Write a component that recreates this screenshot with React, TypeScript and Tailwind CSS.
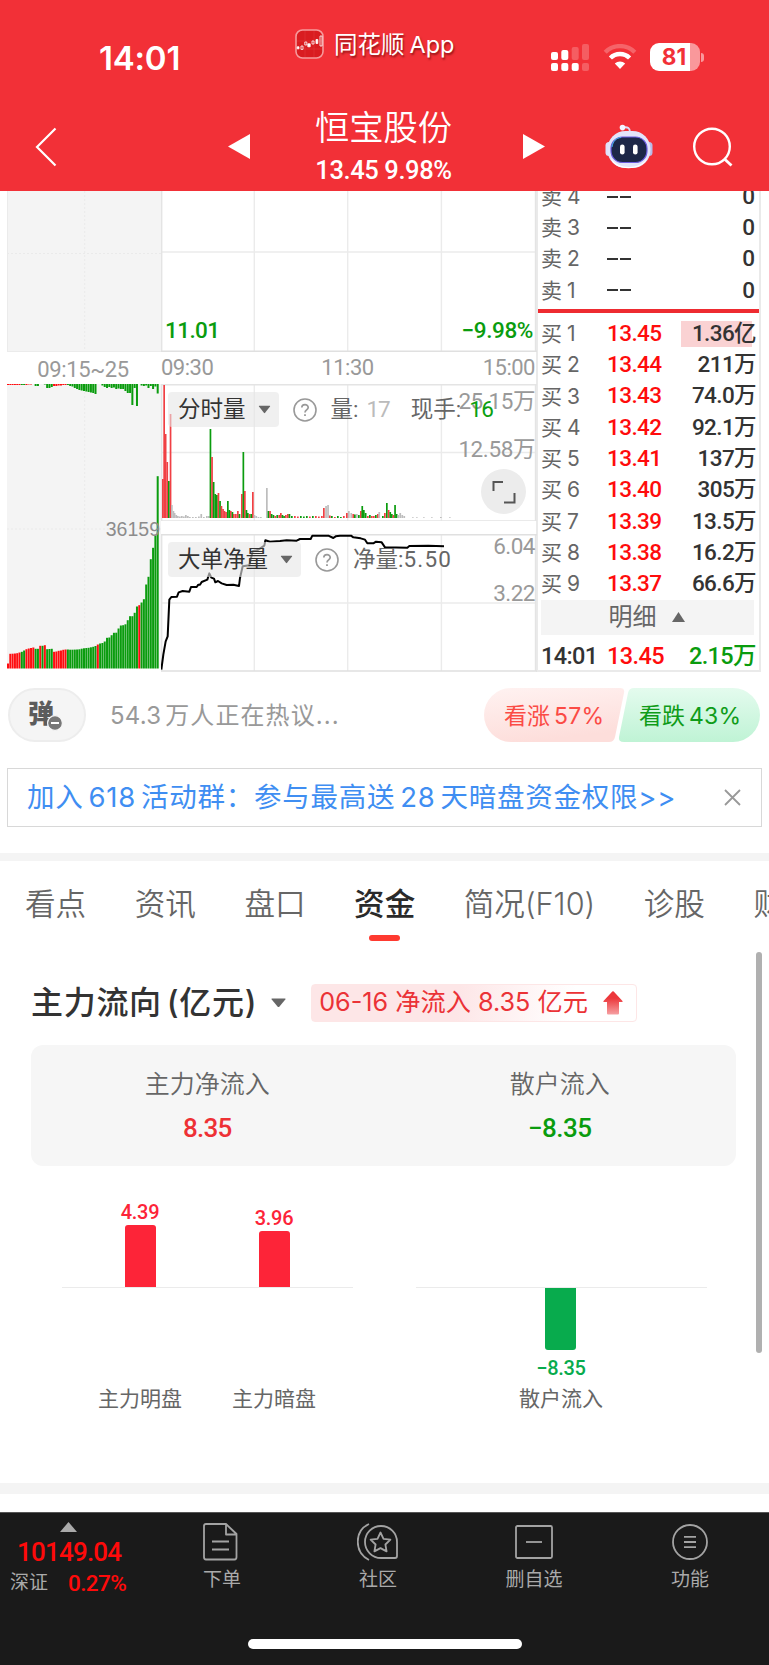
import type { ReactNode } from "react";

const DIN = "font-['Roboto','Noto_Sans_CJK_SC',sans-serif]";

const RED = "#f04044";
const GREEN = "#0a9c0e";
const GRAY = "#bdbdbd";

const asks = ["4", "3", "2", "1"];

const bids = [
  { level: "1", price: "13.45", amount: "1.36亿" },
  { level: "2", price: "13.44", amount: "211万" },
  { level: "3", price: "13.43", amount: "74.0万" },
  { level: "4", price: "13.42", amount: "92.1万" },
  { level: "5", price: "13.41", amount: "137万" },
  { level: "6", price: "13.40", amount: "305万" },
  { level: "7", price: "13.39", amount: "13.5万" },
  { level: "8", price: "13.38", amount: "16.2万" },
  { level: "9", price: "13.37", amount: "66.6万" },
];

// Call auction: matched volume, one bar per tick
const auctionBars = [
  5, 14.7, 14.8, 15, 15.3, 16, 16.7, 18, 19.3, 20, 20.5, 21, 19.7, 19.7, 22.7, 22.7, 23.3, 19.3, 19.5, 19.7, 16.7, 17,
  17.7, 18, 18.7, 19, 19, 18.8, 18.8, 18.9, 19, 19.2, 19.8, 20.2, 20.5, 20.7, 21.2, 21.7, 22.5, 24, 25, 25.5, 27, 30.7,
  31, 33.3, 35.7, 35.8, 40, 43, 43.3, 44.2, 48.3, 52.3, 52.3, 55.7, 62, 63.3, 66, 69.3, 84, 91.7, 109.3, 120.7, 132.7,
  192.3,
];
const auctionRed = [0, 1, 2, 3, 4, 5, 8, 9, 10, 11, 14, 16, 20, 21, 22, 23, 24, 25, 39, 57];

// Call auction: unmatched volume, hangs from the top edge
const unmatchedBars = [
  1, 1, 1, 1, 1, 1, 1, 1, 1, 0.5, 0.5, 0, 2, 2, 0, 0, 0.5, 4, 4, 3, 2, 2, 1.5, 1.5, 1, 1, 1, 2, 2.5, 4, 5, 6, 6.5, 7,
  7.5, 8, 8.5, 9, 10, 0, 0, 1.5, 3, 4, 3, 4, 3.5, 5, 4.5, 5, 5, 7, 9, 9, 21, 4, 22, 0, 1.5, 2, 1.5, 4, 2, 5, 2.5, 9.5,
];
const unmatchedRed = [0, 1, 2, 3, 4, 5, 8, 9, 10, 20, 21, 22, 23, 24, 25];

// [x, height, colour] in a 376x137 panel
const volumeBars: [number, number, string][] = [
  [1, 39, RED], [2.3, 133, RED], [3.8, 84, RED], [5.4, 56, RED], [7, 37, GREEN], [8.7, 104, RED], [10, 13, GRAY],
  [11.6, 7, GRAY], [12.8, 5, GRAY], [14.4, 3, GRAY], [16, 2, GRAY], [18, 1.5, GRAY], [20, 2, GRAY], [22, 1.5, GRAY],
  [24, 3, GRAY], [26, 2, GRAY], [28, 1, GRAY], [31, 1, GRAY], [34, 1, GRAY], [37, 1.5, GRAY], [39.4, 4, GRAY],
  [42, 1, GRAY], [45, 2, GRAY], [47, 2, GRAY], [48.6, 89, GREEN], [50.2, 61, RED], [51.8, 36, GREEN], [53.4, 24, GREEN],
  [55, 23, GREEN], [56.6, 25, RED], [58.2, 17, GREEN], [59.6, 12, RED], [61.2, 9, RED], [62.6, 7, RED], [64.2, 6, RED],
  [66, 17, GREEN], [67.5, 8, GREEN], [69, 7, RED], [70.6, 6, GREEN], [72, 4, RED], [74, 4, RED], [76, 7, RED],
  [77.6, 4, GREEN], [80, 24, RED], [81.5, 66, GREEN], [83, 27, RED], [84.6, 8, GREEN], [86, 5, GREEN], [87.8, 4, RED],
  [89.4, 4, GREEN], [91, 26, RED], [92.6, 3, GRAY], [94.4, 2, GRAY], [96.6, 1, GRAY], [99, 1, GRAY], [105, 30, GRAY],
  [106.6, 7, GREEN], [108.2, 7, RED], [109.8, 4, GREEN], [111.6, 3, GREEN], [113.4, 2, RED], [115.4, 3, GREEN],
  [117.4, 3, RED], [119, 5, RED], [120.6, 3, GREEN], [122.2, 2, GREEN], [124, 3, RED], [126, 4, RED], [127.6, 4, GREEN],
  [130, 2, GREEN], [133, 2, RED], [136, 1.5, RED], [139, 2, GREEN], [142, 1.5, GREEN], [145, 2, GREEN], [148, 1.5, RED],
  [151, 2, GREEN], [154, 2, RED], [157, 1.5, RED], [160, 2, RED], [162, 10, RED], [164.2, 12, GRAY], [166.2, 13, GRAY],
  [168, 2.5, RED], [170, 2, GREEN], [173, 1, RED], [176, 2, GREEN], [179, 1, GREEN], [182, 2, RED], [185, 5, RED],
  [187, 7, GRAY], [189.4, 5, GRAY], [191.4, 4, RED], [193, 3.5, GREEN], [195, 4, GRAY], [197, 3, GREEN], [199, 7, RED],
  [200.4, 12, GREEN], [202, 8, GREEN], [203.8, 5, GREEN], [206, 2, RED], [208, 3, GREEN], [210, 2, RED], [212, 2, RED],
  [214, 3, GREEN], [216, 4, RED], [217.4, 6, GRAY], [221, 2, GREEN], [223, 5, RED], [225, 15, GREEN], [226.8, 8, RED],
  [228.4, 6, GREEN], [230, 4, GREEN], [231.6, 3, RED], [233.2, 13, GREEN], [234.8, 4, GREEN], [236.4, 3, GRAY],
  [238.4, 5, GRAY], [240.4, 3, GRAY], [242.4, 2, GRAY], [251, 0.7, GRAY], [255, 0.7, GRAY], [262, 0.7, GRAY],
  [270, 0.7, GRAY], [279, 1, GRAY], [288, 0.7, GRAY],
];

const netLine =
  "1,407 7,362 14,322 20,307 25,197 31,189 48,188 53,175 65,171 85,173 90,159 107,159 112,152 117,152 122,144 139,137 145,118 151,131 159,134 163,145 171,141 182,148 197,153 217,152 234,156 237,132 245,97 265,94 275,52 292,47 310,35 313,19 327,23 357,21 377,19 407,20 417,15 449,15 454,5 502,5 517,12 524,7 537,5 570,5 577,10 599,13 612,17 619,28 637,28 645,23 662,25 672,40 739,41 745,36 802,35 849,37";

function TimeGrid({ height, middle }: { height: number; middle: number }) {
  return (
    <g stroke="#ebebeb" strokeWidth="1.4" fill="none">
      <path d={`M93.3 0V${height} M186.7 0V${height} M280.4 0V${height} M0 ${middle}H374`} />
      <path d={`M0.7 0V${height} M374.5 0V${height}`} stroke="#e4e4e4" />
    </g>
  );
}

function Help() {
  return (
    <svg width="24" height="24" viewBox="0 0 24 24" fill="none" stroke="#999" strokeWidth="1.6">
      <circle cx="12" cy="12" r="11" />
      <path d="M8.8 9.6c0-4 6.4-4 6.4-.1 0 2.4-3.2 2.5-3.2 5" strokeWidth="1.700" />
      <path d="M12 16.2v1.8" strokeWidth="1.8" />
    </svg>
  );
}

function Caret({ className = "" }: { className?: string }) {
  return (
    <svg className={className} width="13" height="9" viewBox="0 0 13 9" fill="#666">
      <path d="M1.3.8h10.4q.8 0 .3.7L7.1 7.8q-.6.7-1.2 0L1 1.5Q.5.8 1.3.8z" />
    </svg>
  );
}

function StatusBar() {
  return (
    <div className="relative flex h-[104px] items-start">
      <span className="mt-[35.500px] ml-[99px] w-[196px] text-[33px] leading-[44px] font-semibold tracking-[-0.200px]">14:01</span>
      <svg className="mt-[29px]" width="29" height="30" viewBox="0 0 29 30" fill="none">
        <rect x="1" y="1" width="27" height="28" rx="6.5" fill="#d91c20" stroke="#f69a9c" strokeWidth="1.6" />
        <path d="M2 12h25M2 20h25M10 2v26M19 2v26" stroke="#e23a3d" strokeWidth=".5" />
        <g stroke="#fff" strokeWidth=".8">
          <path d="M2.200 17.800h1.800v2H2.200zM12.800 14.800h2.400v3h-2.400zM21 10.500h1.800v4H21z" fill="#fff" />
          <path d="M6 17h2v3.400H6zM9.800 13h2v3h-2zM17 12h2v3h-2zM25 7h2v10h-2z" />
        </g>
      </svg>
      <span className="mt-[28px] ml-[10px] text-[23.500px] leading-[34px] whitespace-nowrap [text-shadow:1px_2px_2px_rgba(90,0,0,0.6)]">
        同花顺<span className="ml-[5px]">App</span>
      </span>
      <svg className="absolute top-[43px] left-[551px]" width="39" height="28" viewBox="0 0 39 28" fill="#fff">
        <rect y="9" width="7" height="8" rx="2" />
        <rect x="10.3" y="7" width="7" height="10" rx="2" />
        <rect x="20.7" y="4" width="7" height="13" rx="2" opacity=".22" />
        <rect x="31" y="1" width="7" height="16" rx="2" opacity=".22" />
        <rect y="20" width="7" height="8" rx="2" />
        <rect x="10.3" y="20" width="7" height="8" rx="2" />
        <rect x="20.7" y="20" width="7" height="8" rx="2" />
        <rect x="31" y="20" width="7" height="8" rx="2" opacity=".22" />
      </svg>
      <svg className="absolute top-[44px] left-[603px]" width="34" height="26" viewBox="0 0 34 26" fill="none" stroke="#fff">
        <path d="M2.2 8.2a21 21 0 0 1 29.6 0" strokeWidth="4.4" opacity=".25" />
        <path d="M7.4 14a13.5 13.5 0 0 1 19.2 0" strokeWidth="4.4" />
        <path d="M11.8 19.6a7.3 7.3 0 0 1 10.4 0L17 25z" fill="#fff" stroke="none" />
      </svg>
      <div className="absolute top-[43px] left-[650px] flex items-center">
        <div className="flex h-[28px] w-[50px] items-center justify-center rounded-[9px] bg-[linear-gradient(90deg,#fff_81%,#f9989b_81%)] text-[22.500px] leading-none font-bold text-[#f23037]">
          <span className="-ml-[2px]">81</span>
        </div>
        <div className="ml-[1px] h-[9px] w-[3px] rounded-r-full bg-[#f9989b]" />
      </div>
    </div>
  );
}

function RobotIcon() {
  return (
    <svg width="48" height="45" viewBox="0 0 48 45" fill="none">
      <path d="M18 3.5c5-.8 7 .5 7 5" stroke="#dcdcf6" strokeWidth="2" />
      <circle cx="17.5" cy="3.6" r="2.8" fill="#f4f4ff" />
      <rect x=".5" y="18" width="7" height="14" rx="3.5" fill="#dfe0fa" />
      <rect x="40.5" y="18" width="7" height="14" rx="3.5" fill="#b9bbe8" />
      <rect x="2.5" y="7" width="43" height="37" rx="18" fill="#e3e4fa" />
      <path d="M6 34c7 12 29 12 36 0-2 13-34 14-36 0z" fill="#fff" />
      <rect x="6" y="13" width="36" height="25.500" rx="11.500" fill="#1d2748" stroke="#6c5de0" strokeWidth="1.2" />
      <path d="M7 23c1-6 4-9 9-9.500" stroke="#43b8e8" strokeWidth="1" />
      <rect x="15" y="20.500" width="4.600" height="10" rx="2.300" fill="#fff" />
      <rect x="28" y="20.500" width="4.600" height="10" rx="2.300" fill="#fff" />
    </svg>
  );
}

function Header() {
  return (
    <header className="h-[191px] bg-[#f23037] text-white">
      <StatusBar />
      <div className="flex h-[87px] items-start">
        <svg className="mt-[23px] ml-[35px]" width="22" height="40" viewBox="0 0 22 40" fill="none" stroke="#fff" strokeWidth="2.2">
          <path d="M20.500 1.500 2 20l18.500 18.500" />
        </svg>
        <svg className="mt-[30px] ml-[171px]" width="22" height="25" viewBox="0 0 22 25" fill="#fff">
          <path d="M0 12.500 22 0v25z" />
        </svg>
        <div className="ml-[45px] flex w-[177px] flex-col items-center">
          <div className="mt-[2px] text-[34.300px] leading-[44px] font-[350]">恒宝股份</div>
          <div className={`${DIN} text-[25.500px] leading-[40px] font-medium tracking-[-0.400px]`}>13.45 9.98%</div>
        </div>
        <svg className="mt-[30px] ml-[51px]" width="22" height="25" viewBox="0 0 22 25" fill="#fff">
          <path d="M22 12.500 0 0v25z" />
        </svg>
        <div className="mt-[20px] ml-[60px]">
          <RobotIcon />
        </div>
        <svg className="mt-[23px] ml-[40px]" width="41" height="41" viewBox="0 0 41 41" fill="none" stroke="#fff" strokeWidth="2.400">
          <circle cx="19" cy="19.500" r="17.800" />
          <path d="m31.500 32 7 6.500" strokeWidth="2.800" />
        </svg>
      </div>
    </header>
  );
}

function AuctionColumn() {
  const step = 152 / auctionBars.length;
  return (
    <div className="w-[154px]">
      <svg className="block" width="154" height="161" viewBox="0 0 154 161">
        <rect width="154" height="161" fill="#f4f4f4" />
        <path d="M77.700 0V161M0 62.500H154" stroke="#eaeaea" strokeDasharray="2 2" />
        <path d="M.5 0V161M0 160.500H154" stroke="#ebebeb" />
      </svg>
      <div className={`${DIN} h-[32px] text-center text-[22px] leading-[35px] tracking-[-0.400px] text-[#999]`}>
        <span className="-ml-[2px]">09:15~25</span>
      </div>
      <div className="relative">
        <svg className="block" width="154" height="287" viewBox="0 0 154 287">
          <rect width="154" height="284" fill="#f4f4f4" />
          <path d="M77.700 0V284M0 145H154" stroke="#eaeaea" strokeDasharray="2 2" />
          {auctionBars.map((h, i) => (
            <rect key={i} x={i * step} y={284.500 - h} width={2} height={h} fill={auctionRed.includes(i) ? "#ff0d10" : GREEN} />
          ))}
          {unmatchedBars.map((h, i) => (
            <rect key={i} x={i * step} y={0} width={2} height={h} fill={unmatchedRed.includes(i) ? "#ff0d10" : GREEN} />
          ))}
        </svg>
        <span className="absolute top-[133px] right-[1px] font-['Liberation_Sans',sans-serif] text-[19.500px] leading-[24px] text-[#8c8c8c]">
          36159
        </span>
      </div>
    </div>
  );
}

function ChartLegend({ name, children }: { name: string; children: ReactNode }) {
  return (
    <div className="absolute top-[8px] left-[7px] flex h-[35px] items-center text-[22.500px] text-[#666]">
      <div className="flex h-full items-center rounded-[4px] bg-[#e6e6e6]/60 pr-[8px] pl-[10px] text-[#333]">
        {name}
        <Caret className="ml-[12px]" />
      </div>
      <div className="ml-[14px]">
        <Help />
      </div>
      {children}
    </div>
  );
}

function IntradayColumn() {
  return (
    <div className={`${DIN} w-[376px]`}>
      <div className="relative h-[161px]">
        <svg className="block" width="376" height="161" viewBox="0 0 376 161">
          <TimeGrid height={161} middle={61} />
          <path d="M0 160.300H376" stroke="#e0e0e0" strokeWidth="1.400" />
        </svg>
        <span className="absolute bottom-[8px] left-[4px] text-[22.500px] leading-[28px] font-medium tracking-[-0.600px] text-[#0a9c0e]">11.01</span>
        <span className="absolute right-[4px] bottom-[8px] text-[22.500px] leading-[28px] font-medium tracking-[-0.400px] text-[#0a9c0e]">−9.98%</span>
      </div>
      <div className="flex h-[32px] justify-between pr-[2px] text-[22px] leading-[31px] tracking-[-0.500px] text-[#999]">
        <span>09:30</span>
        <span className="-ml-[1px]">11:30</span>
        <span>15:00</span>
      </div>
      <div className="relative h-[137px]">
        <svg className="block" width="376" height="137" viewBox="0 0 376 137">
          <TimeGrid height={137} middle={68.500} />
          <path d="M0 .7H376M0 137H376" stroke="#e4e4e4" strokeWidth="1.400" />
          {volumeBars.map(([x, h, fill]) => (
            <rect key={x} x={x} y={134 - h} width={1.700} height={h} fill={fill} />
          ))}
        </svg>
        <span className="absolute top-[3px] right-[2px] text-[22.500px] leading-[28px] tracking-[-0.400px] text-[#999]">25.15万</span>
        <span className="absolute top-[51px] right-[2px] text-[22.500px] leading-[28px] tracking-[-0.400px] text-[#999]">12.58万</span>
        <ChartLegend name="分时量">
          <span className="ml-[14px]">量:</span>
          <span className="ml-[8px] tracking-[-1px] text-[#bbb]">17</span>
          <span className="ml-[21px]">现手:</span>
          <span className="ml-[8px] tracking-[-0.500px] text-[#0aa010]">16</span>
        </ChartLegend>
        <div className="absolute top-[85px] right-[11px] flex size-[45px] items-center justify-center rounded-full bg-[#ececec]">
          <svg width="24" height="24" viewBox="0 0 24 24" fill="none" stroke="#555" strokeWidth="2">
            <path d="M1.500 11V2H11M22.500 13v9.500H12" />
          </svg>
        </div>
      </div>
      <div className="relative mt-[13px] h-[138px]">
        <svg className="block" width="376" height="138" viewBox="0 0 1128 414">
          <g transform="scale(3)">
            <TimeGrid height={137} middle={69} />
            <path d="M0 .7H376M0 137H376" stroke="#e0e0e0" strokeWidth="1.400" />
          </g>
          <polyline points={netLine} fill="none" stroke="#000" strokeWidth="6" strokeLinejoin="round" />
        </svg>
        <span className="absolute top-[-2px] right-[2px] text-[22.500px] leading-[28px] tracking-[-0.500px] text-[#999]">6.04</span>
        <span className="absolute top-[45px] right-[2px] text-[22.500px] leading-[28px] tracking-[-0.500px] text-[#999]">3.22</span>
        <ChartLegend name="大单净量">
          <span className="ml-[14px]">
            净量:<span className="tracking-[1.200px]">5.50</span>
          </span>
        </ChartLegend>
      </div>
    </div>
  );
}

function OrderBook() {
  return (
    <div className={`${DIN} -ml-px flex h-[481px] w-[225px] flex-col overflow-hidden border-x-2 border-b-2 border-[#eaeaea]`}>
      <div className="flex h-[118px] shrink-0 flex-col justify-end overflow-hidden pb-[3px]">
        {asks.map((level) => (
          <div key={level} className="flex h-[31.200px] shrink-0 items-center pr-[4px] pl-[3px] text-[22.500px] text-[#333]">
            <span className="w-[66px] font-['Inter','Noto_Sans_CJK_SC',sans-serif] text-[21px] text-[#666]">
              卖<span className="ml-[5px]">{level}</span>
            </span>
            <span className="flex gap-[2px]">
              <i className="h-[2px] w-[11px] bg-[#333]" />
              <i className="h-[2px] w-[11px] bg-[#333]" />
            </span>
            <span className="ml-auto font-medium">0</span>
          </div>
        ))}
      </div>
      <div className="h-[4px] shrink-0 bg-[#ee2b31]" />
      <div className="mt-[5px] flex shrink-0 flex-col">
        {bids.map(({ level, price, amount }) => (
          <div key={level} className="flex h-[31.300px] items-center pl-[3px] text-[22.500px] font-medium">
            <span className="w-[66px] font-['Inter','Noto_Sans_CJK_SC',sans-serif] text-[21px] font-normal text-[#666]">
              买<span className="ml-[5px]">{level}</span>
            </span>
            <span className="tracking-[-0.600px] text-[#ff0c0c]">{price}</span>
            <span
              className={`ml-auto flex h-[26px] items-center justify-end tracking-[-0.600px] text-[#333] ${
                level === "1" ? "w-[78px] bg-[linear-gradient(90deg,#fad2d3_71px,transparent_71px)] pr-[3px]" : "pr-[3px]"
              }`}
            >
              {amount}
            </span>
          </div>
        ))}
      </div>
      <div className="ml-[3px] flex h-[35px] w-[213px] shrink-0 items-center justify-center bg-[#f4f4f4] pr-[2px] text-[24px] text-[#666]">
        明细
        <svg className="ml-[15px]" width="13" height="10" viewBox="0 0 13 10" fill="#666">
          <path d="M6.500 0 13 10H0z" />
        </svg>
      </div>
      <div className="flex h-[43px] shrink-0 items-center pr-[3px] pl-[3px] text-[23.500px] font-medium tracking-[-0.600px] text-[#333]">
        <span className="w-[66px]">14:01</span>
        <span className="text-[#ff0c0c]">13.45</span>
        <span className="ml-auto text-[#0a9c0e]">2.15万</span>
      </div>
    </div>
  );
}

function DiscussionRow() {
  return (
    <div className="mt-[16px] flex h-[54px] items-center pr-[9px] pl-[8px]">
      <div className="flex h-[54px] w-[78px] items-center justify-center rounded-full border-2 border-[#ededed] bg-[#f5f5f5]">
        <div className="relative -mt-[2px] -ml-[12px] text-[26px] leading-[32px] font-black text-[#5c5c5c]">
          弹
          <svg className="absolute top-[17px] left-[19px]" width="16" height="16" viewBox="0 0 16 16">
            <circle cx="8" cy="8" r="7.400" fill="#777" stroke="#f5f5f5" strokeWidth="1.200" />
            <path d="M4 8h8" stroke="#fff" strokeWidth="2" />
          </svg>
        </div>
      </div>
      <span className="mt-[2px] ml-[24px] text-[24px] tracking-[0.200px] text-[#999]">
        54.3<span className="ml-[4px] tracking-[1.100px]">万人正在热议...</span>
      </span>
      <div className="relative ml-auto flex h-[54px] w-[276px] text-[23px]">
        <svg className="absolute inset-0" width="276" height="54" viewBox="0 0 276 54">
          <defs>
            <linearGradient id="up" x1="0" y1="0" x2="0.300" y2="1">
              <stop offset="0" stopColor="#fff2f1" />
              <stop offset="1" stopColor="#fddedb" />
            </linearGradient>
            <linearGradient id="down" x1="0" y1="0" x2="0" y2="1">
              <stop offset="0" stopColor="#e4fbee" />
              <stop offset="1" stopColor="#bff3d5" />
            </linearGradient>
          </defs>
          <path d="M27 0H136q5 0 4 5l-9 44q-1 5-6 5H27a27 27 0 0 1 0-54z" fill="url(#up)" />
          <path d="M150 0h99a27 27 0 0 1 0 54H140q-6 0-5-5l9-44q1-5 6-5z" fill="url(#down)" />
        </svg>
        <span className="relative w-[136px] pl-[20px] leading-[56px] text-[#fb4b45]">
          看涨<span className="ml-[4px] tracking-[0.200px]">57%</span>
        </span>
        <span className="relative pl-[19px] leading-[56px] text-[#0f9c19]">
          看跌<span className="ml-[4px] tracking-[0.200px]">43%</span>
        </span>
      </div>
    </div>
  );
}

function Tabs() {
  const tabs = ["看点", "资讯", "盘口", "资金", "简况(F10)", "诊股", "财务"];
  return (
    <nav className="flex h-[91px] gap-[48.500px] overflow-hidden pl-[25px] text-[30.600px] whitespace-nowrap text-[#666]">
      {tabs.map((tab) => (
        <div key={tab} className="flex shrink-0 flex-col items-center">
          <span className={`mt-[21px] leading-[44px] ${tab === "资金" ? "font-medium text-[#2a2a2a]" : "font-[350]"}`}>{tab}</span>
          {tab === "资金" && <i className="mt-[9px] h-[6px] w-[31px] rounded-full bg-[#fe3a30]" />}
        </div>
      ))}
    </nav>
  );
}

function FlowBar({ value, label, className }: { value: string; label: string; className: string }) {
  const negative = value.startsWith("−");
  return (
    <div className={`flex w-[134px] flex-col items-center ${className}`}>
      <div className="flex h-[88px] flex-col items-center justify-end">
        {!negative && (
          <>
            <span className={`${DIN} text-[20px] leading-[26px] font-medium tracking-[-0.300px] text-[#fd2438]`}>{value}</span>
            <i className={`w-[31px] rounded-t-[3px] bg-[#fd2438] ${value === "4.39" ? "h-[62px]" : "h-[56px]"}`} />
          </>
        )}
      </div>
      <div className="flex h-[98px] flex-col items-center pt-[1px]">
        {negative && (
          <>
            <i className="h-[62px] w-[31px] rounded-b-[3px] bg-[#08ab4d]" />
            <span className={`${DIN} mt-[5px] text-[20px] leading-[26px] font-medium tracking-[-0.300px] text-[#08ab4d]`}>{value}</span>
          </>
        )}
      </div>
      <span className="text-[21px] leading-[28px] text-[#666]">{label}</span>
    </div>
  );
}

function FundPanel() {
  return (
    <section className="relative h-[531px] pr-[33px] pl-[31px]">
      <div className="absolute top-0 right-[7px] h-[401px] w-[6px] rounded-full bg-[#b0b0b0]" />
      <div className="flex h-[101px] items-center">
        <h2 className="text-[32px] font-medium tracking-[0.700px] whitespace-nowrap text-[#333]">
          主力流向<span className="ml-[5px]">(亿元)</span>
        </h2>
        <svg className="ml-[14px]" width="15" height="10" viewBox="0 0 15 10" fill="#666">
          <path d="M1 .5h13q1 0 .3.900L8.500 8.600q-1 1-2 0L.7 1.400Q0 .5 1 .5z" />
        </svg>
        <div className="ml-[25px] flex h-[38px] w-[326px] shrink-0 items-center rounded-[4px] border border-[#fde6e6] bg-[linear-gradient(100deg,#fde6e7_45%,#fff_80%)] pl-[7px] text-[25.200px] whitespace-nowrap text-[#eb3236]">
          06-16 净流入 8.35 亿元
          <svg className="ml-[15px]" width="20" height="24" viewBox="0 0 20 24">
            <defs>
              <linearGradient id="arrow" x1="0" y1="0" x2="0" y2="1">
                <stop offset=".3" stopColor="#ec373b" />
                <stop offset="1" stopColor="#f6a0a2" />
              </linearGradient>
            </defs>
            <path d="M9.300.5q.7-.6 1.400 0l8.800 9.500q.6 1-.5 1H16v11.500q0 1-1 1H5q-1 0-1-1V11H1q-1.100 0-.5-1z" fill="url(#arrow)" />
          </svg>
        </div>
      </div>
      <div className="mt-[-8px] grid h-[121px] grid-cols-2 rounded-[12px] bg-[#f6f6f6] text-center">
        <div className="pt-[22px]">
          <div className="text-[25px] leading-[34px] font-[350] text-[#666]">主力净流入</div>
          <div className={`${DIN} mt-[10px] text-[26px] leading-[34px] font-medium tracking-[-0.800px] text-[#ee3135]`}>8.35</div>
        </div>
        <div className="pt-[22px]">
          <div className="text-[25px] leading-[34px] font-[350] text-[#666]">散户流入</div>
          <div className={`${DIN} mt-[10px] text-[26px] leading-[34px] font-medium tracking-[-0.500px] text-[#0a9c0e]`}>−8.35</div>
        </div>
      </div>
      <div className="relative mt-[33px] flex">
        <i className="absolute top-[88px] left-[31px] h-px w-[291px] bg-[#ebebeb]" />
        <i className="absolute top-[88px] left-[385px] h-px w-[291px] bg-[#ebebeb]" />
        <FlowBar value="4.39" label="主力明盘" className="ml-[42px]" />
        <FlowBar value="3.96" label="主力暗盘" className="" />
        <FlowBar value="−8.35" label="散户流入" className="ml-[153px]" />
      </div>
    </section>
  );
}

function NavItem({ label, children }: { label: string; children: ReactNode }) {
  return (
    <div className="flex w-[156px] flex-col items-center pt-[8px]">
      <svg width="42" height="42" viewBox="0 0 42 42" fill="none" stroke="#a3a3a3" strokeWidth="1.800" strokeLinejoin="round">
        {children}
      </svg>
      <span className="mt-[4px] text-[19px] leading-[26px] text-[#aaa]">{label}</span>
    </div>
  );
}

function BottomBar() {
  return (
    <footer className="h-[153px] border-t border-[#555] bg-[#1a1a1a]">
      <div className="flex h-[126px]">
        <div className={`${DIN} w-[144px] text-[#ff0a0a]`}>
          <svg className="mt-[9px] ml-[60px]" width="17" height="10" viewBox="0 0 17 10" fill="#aaa">
            <path d="M8.500 0 17 10H0z" />
          </svg>
          <div className="mt-[5px] ml-[17px] text-[26px] leading-[30px] font-medium tracking-[-0.800px]">10149.04</div>
          <div className="mt-[1px] ml-[10px] flex items-center text-[22.500px] leading-[30px] font-medium tracking-[-0.600px]">
            <span className="w-[58px] text-[19px] font-normal tracking-normal text-[#aaa]">深证</span>
            0.27%
          </div>
        </div>
        <NavItem label="下单">
          <path d="M3 5q0-2 2-2h20l10.500 10V36q0 2.500-2 2.500H5q-2 0-2-2.500zM25 3v10.500h10M11 20.500h17M11 28.500h17" />
        </NavItem>
        <NavItem label="社区">
          <path d="M12 3C-3 10-3 31 12 39" />
          <path d="M24 5a16 16 0 1 0 0 32h14q2 0 2-2V21A16 16 0 0 0 24 5z" />
          <path d="m23.500 11.500 3 6.300 6.900.9-5 4.800 1.200 6.900-6.100-3.300-6.100 3.300 1.200-6.900-5-4.800 6.900-.9z" />
        </NavItem>
        <NavItem label="删自选">
          <rect x="3" y="5" width="36" height="32" rx="1.500" />
          <path d="M13 21h16" />
        </NavItem>
        <NavItem label="功能">
          <circle cx="21" cy="21" r="17" />
          <path d="M15 15.800h12M15 21h12M15 26.200h12" />
        </NavItem>
      </div>
      <div className="ml-[248px] h-[10px] w-[274px] rounded-full bg-white" />
    </footer>
  );
}

export default function App() {
  return (
    <div className="h-[1665px] w-[769px] overflow-hidden bg-white font-['Inter','Noto_Sans_CJK_SC',sans-serif]">
      <Header />
      <div className="flex h-[481px] pl-[7px]">
        <AuctionColumn />
        <IntradayColumn />
        <OrderBook />
      </div>
      <DiscussionRow />
      <div className="mx-[7px] mt-[26px] flex h-[59px] items-center justify-between border border-[#d8d8d8] pr-[20px] pl-[19px]">
        <span className="mt-[1px] text-[27.500px] tracking-[0.750px] whitespace-nowrap text-[#3f8ef2]">
          加入<span className="mx-[5px]">618</span>活动群：参与最高送<span className="mx-[5px]">28</span>天暗盘资金权限&gt;&gt;
        </span>
        <svg width="17" height="17" viewBox="0 0 17 17" fill="none" stroke="#999" strokeWidth="1.800">
          <path d="m1 1 15 15M16 1 1 16" />
        </svg>
      </div>
      <div className="mt-[26px] h-[8px] bg-[#f4f4f4]" />
      <Tabs />
      <FundPanel />
      <div className="mb-[18px] h-[11px] bg-[#f4f4f4]" />
      <BottomBar />
    </div>
  );
}
